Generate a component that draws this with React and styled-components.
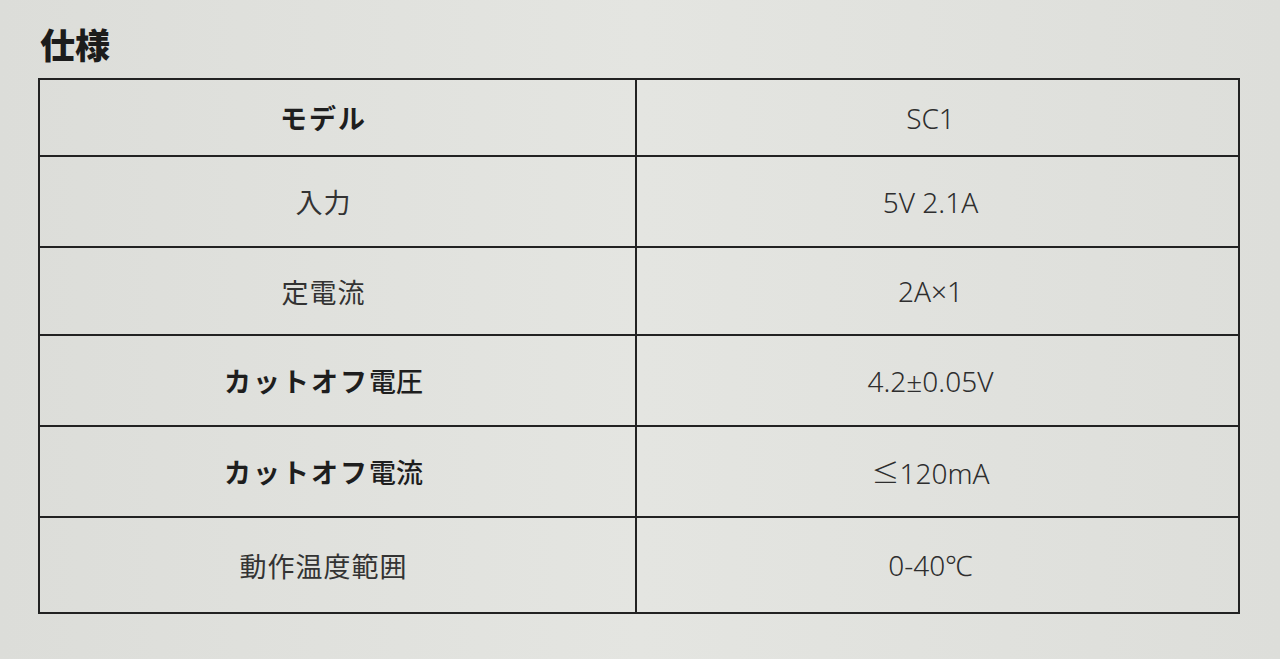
import React from 'react'
import styled, { createGlobalStyle } from 'styled-components'

const GlobalStyle = createGlobalStyle`
  html, body {
    margin: 0;
    padding: 0;
    background: #dfe0dc;
  }
  body {
    font-family: "Noto Sans CJK JP", "Noto Sans", sans-serif;
    color: #262626;
  }
`

const rows = [
  { label: 'モデル', value: 'SC1', bold: true },
  { label: '入力', value: '5V 2.1A' },
  { label: '定電流', value: '2A×1' },
  { label: 'カットオフ', rest: '電圧', value: '4.2±0.05V', bold: true },
  { label: 'カットオフ', rest: '電流', value: '≤120mA', bold: true },
  { label: '動作温度範囲', value: '0-40℃' },
]

const heights = [77, 91, 88, 91, 91, 94]

function App() {
  return (
    <Page>
      <GlobalStyle />
      <Title>仕様</Title>
      <Table>
        {rows.map((row, index) => (
          <Row key={row.value} $h={heights[index]} $last={index === rows.length - 1}>
            <Label $bold={row.bold}>
              {row.label}
              {row.rest && <Kanji>{row.rest}</Kanji>}
            </Label>
            <Value>{row.value}</Value>
          </Row>
        ))}
      </Table>
    </Page>
  )
}

const Page = styled.div`
  width: 1280px;
  height: 659px;
  box-sizing: border-box;
  padding: 22px 0 0 38px;
  background: linear-gradient(90deg, #dcddd9 0%, #e4e5e1 50%, #dddeda 100%);
  overflow: hidden;
`

const Title = styled.h1`
  margin: 0 0 12px 2px;
  font-size: 35px;
  line-height: 44px;
  font-weight: 900;
  color: #1c1c1c;
`

const Table = styled.div`
  width: 1198px;
  border: 2px solid #222;
  display: flex;
  flex-direction: column;
`

const Row = styled.div`
  display: grid;
  grid-template-columns: 597px 1fr;
  height: ${p => p.$h}px;
  border-bottom: ${p => (p.$last ? 'none' : '2px solid #222')};
  box-sizing: border-box;
`

const Cell = styled.div`
  display: flex;
  align-items: center;
  justify-content: center;
`

const Label = styled(Cell)`
  border-right: 2px solid #222;
  font-size: 27px;
  letter-spacing: ${p => (p.$bold ? '2px' : '1px')};
  font-weight: ${p => (p.$bold ? 700 : 400)};
  color: ${p => (p.$bold ? '#1e1e1e' : '#333')};
  padding-right: 28px;
`

const Kanji = styled.span`
  font-weight: 500;
  letter-spacing: 0;
`

const Value = styled(Cell)`
  font-family: "Noto Sans", "Noto Sans CJK JP", sans-serif;
  font-size: 28px;
  font-weight: 300;
  color: #2e2e2e;
  padding-right: 14px;
`

export default App
